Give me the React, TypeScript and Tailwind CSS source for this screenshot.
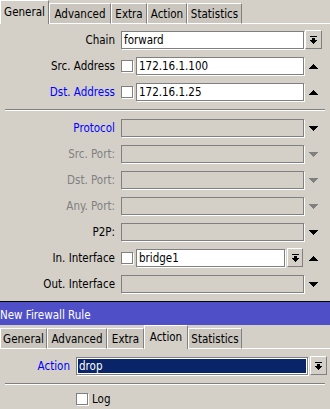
import React from "react";

const FONT = "[font-family:'DejaVu_Sans_Condensed','DejaVu_Sans',sans-serif] [font-stretch:condensed]";

function Up({ c = "#000" }: { c?: string }) {
  return (
    <svg width="9" height="5" shapeRendering="crispEdges">
      {[0, 1, 2, 3, 4].map((i) => (
        <rect key={i} x={4 - i} y={i} width={2 * i + 1} height={1} fill={c} />
      ))}
    </svg>
  );
}

function Down({ c = "#000" }: { c?: string }) {
  return (
    <svg width="9" height="5" shapeRendering="crispEdges">
      {[0, 1, 2, 3, 4].map((i) => (
        <rect key={i} x={i} y={i} width={9 - 2 * i} height={1} fill={c} />
      ))}
    </svg>
  );
}

function DropIcon() {
  return (
    <svg width="7" height="8" shapeRendering="crispEdges">
      <rect x={0} y={0} width={7} height={1} fill="#000" />
      <rect x={2} y={2} width={3} height={2} fill="#000" />
      <rect x={0} y={4} width={7} height={1} fill="#000" />
      <rect x={1} y={5} width={5} height={1} fill="#000" />
      <rect x={2} y={6} width={3} height={1} fill="#000" />
      <rect x={3} y={7} width={1} height={1} fill="#000" />
    </svg>
  );
}

function DropBtn({ className = "" }: { className?: string }) {
  return (
    <div
      className={
        "h-[19px] -mt-px flex items-center justify-center bg-[#d4d0c8] border border-t-white border-l-white border-r-[#808080] border-b-[#808080] " +
        className
      }
    >
      <DropIcon />
    </div>
  );
}

function Check() {
  return (
    <div className="w-[12px] h-[12px] shrink-0 bg-white border border-[#808080] shadow-[1px_1px_0_#ffffff]" />
  );
}

function Field({
  text,
  disabled = false,
  className = "",
}: {
  text?: string;
  disabled?: boolean;
  className?: string;
}) {
  return (
    <div
      className={
        "h-[18px] flex items-center px-[2px] border border-[#808080] shadow-[1px_1px_0_#ffffff] text-black whitespace-nowrap overflow-hidden " +
        (disabled ? "bg-[#d4d0c8] " : "bg-white ") +
        className
      }
    >
      {text}
    </div>
  );
}

function Row({
  label,
  color = "text-black",
  children,
  slot,
}: {
  label: string;
  color?: string;
  children: React.ReactNode;
  slot?: React.ReactNode;
}) {
  return (
    <div className="flex items-center h-[18px]">
      <div className={"w-[115px] shrink-0 text-right whitespace-nowrap " + color}>{label}</div>
      <div className="ml-[6px] w-[183px] shrink-0 flex items-center h-full">{children}</div>
      <div className="flex-1 flex items-center h-full">{slot}</div>
    </div>
  );
}

function Sep() {
  return <div className="mx-[5px] h-[2px] border-t border-[#808080] border-b border-b-white" />;
}

function ActiveTab({ label, w }: { label: string; w: string }) {
  return (
    <div
      className={
        "relative z-10 h-[24px] shrink-0 flex items-center justify-center bg-[#d4d0c8] border-t border-l border-white border-r border-r-[#808080] whitespace-nowrap " +
        w
      }
    >
      {label}
    </div>
  );
}

function Tab({ label, w }: { label: string; w: string }) {
  return (
    <div
      className={
        "mt-[3px] h-[21px] shrink-0 flex items-center justify-center pt-[2px] bg-[#cac6be] border-t border-l border-white border-r border-r-[#808080] border-b border-b-white whitespace-nowrap " +
        w
      }
    >
      {label}
    </div>
  );
}

export default function App() {
  return (
    <div className={"w-[330px] h-[409px] overflow-hidden bg-[#d4d0c8] text-[11.5px] leading-[13px] text-black " + FONT}>
      {/* top tabs */}
      <div className="flex h-[24px]">
        <ActiveTab label="General" w="w-[49px]" />
        <Tab label="Advanced" w="w-[62px]" />
        <Tab label="Extra" w="w-[36px]" />
        <Tab label="Action" w="w-[40px]" />
        <Tab label="Statistics" w="w-[55px]" />
        <div className="flex-1 border-b border-white" />
      </div>

      <div className="flex flex-col gap-[8px] pt-[7px] pb-[8px]">
        <Row label="Chain" slot={<DropBtn className="ml-[1px] w-[17px]" />}>
          <Field text="forward" className="w-full" />
        </Row>
        <Row label="Src. Address" slot={<div className="ml-[5px]"><Up /></div>}>
          <Check />
          <Field text="172.16.1.100" className="ml-[3px] flex-1" />
        </Row>
        <Row label="Dst. Address" color="text-[#0000ff]" slot={<div className="ml-[5px]"><Up /></div>}>
          <Check />
          <Field text="172.16.1.25" className="ml-[3px] flex-1" />
        </Row>
        <Sep />
        <Row label="Protocol" color="text-[#0000ff]" slot={<div className="ml-[5px]"><Down /></div>}>
          <Field disabled className="w-full" />
        </Row>
        <Row label="Src. Port:" color="text-[#808080]" slot={<div className="ml-[5px]"><Down c="#808080" /></div>}>
          <Field disabled className="w-full" />
        </Row>
        <Row label="Dst. Port:" color="text-[#808080]" slot={<div className="ml-[5px]"><Down c="#808080" /></div>}>
          <Field disabled className="w-full" />
        </Row>
        <Row label="Any. Port:" color="text-[#808080]" slot={<div className="ml-[5px]"><Down c="#808080" /></div>}>
          <Field disabled className="w-full" />
        </Row>
        <Row label="P2P:" slot={<div className="ml-[5px]"><Down /></div>}>
          <Field disabled className="w-full" />
        </Row>
        <Row label="In. Interface" slot={<div className="ml-[5px]"><Up /></div>}>
          <Check />
          <Field text="bridge1" className="ml-[3px] w-[149px]" />
          <DropBtn className="ml-[2px] w-[16px]" />
        </Row>
        <Row label="Out. Interface" slot={<div className="ml-[5px]"><Down /></div>}>
          <Field disabled className="w-full" />
        </Row>
      </div>

      <div className="h-px bg-black" />
      <div className="h-[23px] bg-[#4f4fc8] text-white pt-[7px] whitespace-nowrap">New Firewall Rule</div>

      {/* second tabs */}
      <div className="flex h-[24px]">
        <Tab label="General" w="w-[47px]" />
        <Tab label="Advanced" w="w-[60px]" />
        <Tab label="Extra" w="w-[37px]" />
        <ActiveTab label="Action" w="w-[44px]" />
        <Tab label="Statistics" w="w-[54px]" />
        <div className="flex-1 border-b border-white" />
      </div>

      <div className="flex flex-col gap-[8px] pt-[8px]">
        <div className="flex items-center h-[18px]">
          <div className="w-[70px] shrink-0 text-right text-[#0000ff]">Action</div>
          <div className="ml-[6px] w-[232px] h-[18px] shrink-0 border border-[#808080] shadow-[1px_1px_0_#ffffff] bg-white p-px">
            <div className="h-full bg-[#0a246a] text-white flex items-center px-px">drop</div>
          </div>
          <DropBtn className="ml-[2px] w-[17px]" />
        </div>
        <Sep />
        <div className="flex items-center h-[12px]">
          <div className="w-[76px] shrink-0" />
          <Check />
          <span className="ml-[4px]">Log</span>
        </div>
      </div>
    </div>
  );
}
